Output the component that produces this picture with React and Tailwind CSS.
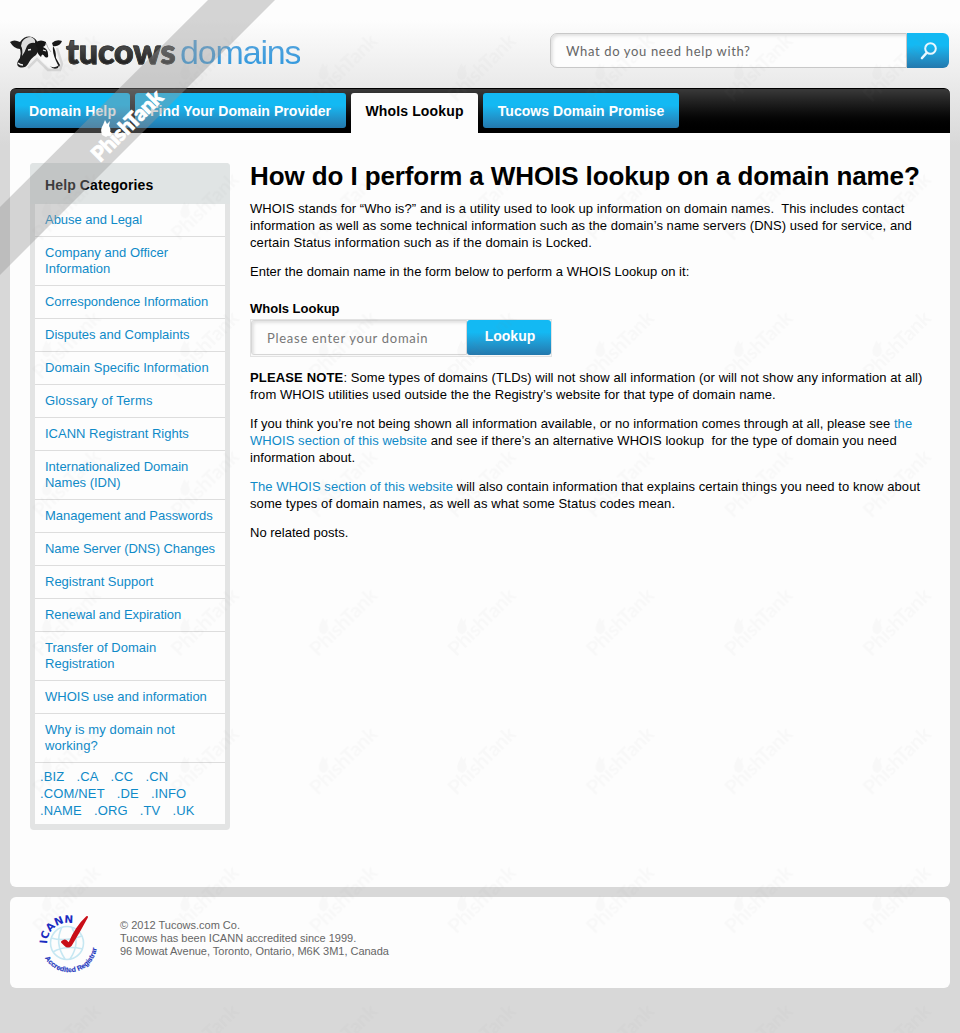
const categories = [
  { name: 'Abuse and Legal', track: 'tracking-[-0.03px]' },
  { name: 'Company and Officer\nInformation', track: 'tracking-[0.03px]' },
  { name: 'Correspondence Information', track: 'tracking-[-0.06px]' },
  { name: 'Disputes and Complaints', track: 'tracking-[0px]' },
  { name: 'Domain Specific Information', track: 'tracking-[0.04px]' },
  { name: 'Glossary of Terms', track: 'tracking-[0.18px]' },
  { name: 'ICANN Registrant Rights', track: 'tracking-[0px]' },
  { name: 'Internationalized Domain\nNames (IDN)', track: 'tracking-[-0.02px]' },
  { name: 'Management and Passwords', track: 'tracking-[-0.03px]' },
  { name: 'Name Server (DNS) Changes', track: 'tracking-[-0.08px]' },
  { name: 'Registrant Support', track: 'tracking-[0px]' },
  { name: 'Renewal and Expiration', track: 'tracking-[-0.05px]' },
  { name: 'Transfer of Domain\nRegistration', track: 'tracking-[0.02px]' },
  { name: 'WHOIS use and information', track: 'tracking-[0px]' },
  { name: 'Why is my domain not\nworking?', track: 'tracking-[0.1px]' },
];

const tlds = [
  ['.BIZ', '.CA', '.CC', '.CN'],
  ['.COM/NET', '.DE', '.INFO'],
  ['.NAME', '.ORG', '.TV', '.UK'],
];

const button = 'bg-gradient-to-b from-[#13b9f3] from-35% to-[#2378ad]';

function CowLogo() {
  return (
    <svg width="54" height="38" viewBox="0 0 54 38" className="shrink-0">
      <path d="M18 32 L27 23 L38 34 L50 34 L52 28 L47 12" fill="none" stroke="#888" strokeWidth="2.5" opacity=".25" />
      <path d="M32 6 Q36 0 42 4 L44 9 Q43 17 49 25 Q51 31 46 32 Q40 34 35 28 Q29 23 27 16 Q28 10 32 6Z" fill="#f8f8f8" />
      <path d="M0 6 Q4 3 10 6 Q15 -1 22 1 Q27 3 28 8 Q30 14 26 19 Q21 22 18 28 Q15 33 9 31 Q6 29 8 25 Q12 20 10 13 Q4 13 0 6Z" fill="#1d1d1d" />
      <path d="M12 6 Q15 1 21 1 Q26 3 25 7 Q20 6 17 10 Q15 16 12 20 Q13 13 11 10Z" fill="#dedede" />
      <path d="M18 14 L21 13.5 M8 27 Q10 29 13 29" stroke="#eee" strokeWidth="1.3" fill="none" />
      <path d="M26 6 Q31 3 36 6 Q36 10 33 11 Q38 13 38 18 Q39 23 35 21 Q32 16 31 21 Q26 17 28 12 Q25 10 26 6Z M42 7 Q46 3 52 5 Q50 11 43 10Z M43 10 Q46 14 46 22 L50 29 L49 31 L46 25 Q42 16 43 10Z" fill="#171717" />
      <path d="M33 14 L36 15" stroke="#eee" strokeWidth="1.2" />
      <path d="M40 30 Q44 33 49 29 L48 32 Q43 34 40 30Z" fill="#222" />
      <path d="M36 7 Q38 13 41 16" stroke="#aaa" strokeWidth=".8" fill="none" />
    </svg>
  );
}

function IcannSeal() {
  return (
    <svg width="60" height="62" viewBox="0 0 60 62" className="overflow-visible">
      <defs>
        <path id="sealTop" d="M12 33 A21 21 0 0 1 53.8 30" />
        <path id="sealBottom" d="M10 47 A27 27 0 0 0 58.5 20" />
      </defs>
      <g fill="none" stroke="#c6e7f2" strokeWidth="1.6">
        <circle cx="32" cy="32" r="16.5" />
        <path d="M16 27 Q30 31 47 25 M18 41 Q29 34 48 38 M27 16 Q19 32 30 48 M37 17 Q46 32 35 48" />
      </g>
      <text fontFamily="DejaVu Sans, sans-serif" fontSize="10.5" fontWeight="700" fill="#1a2bc0" letterSpacing=".2">
        <textPath href="#sealTop">ICANN</textPath>
      </text>
      <text fontFamily="Liberation Sans, sans-serif" fontSize="7" fontWeight="700" fill="#2336bd" stroke="#2336bd" strokeWidth=".15">
        <textPath href="#sealBottom">Accredited Registrar</textPath>
      </text>
      <path d="M27 31 Q30 28 32 31 L34 33 Q41 16 52 6 Q45 19 36 34 Q33 37 30 34Z" fill="#c90e18" stroke="#c90e18" strokeWidth="2" strokeLinejoin="round" />
    </svg>
  );
}

function Fish({ x, y }) {
  return <path transform={`translate(${x} ${y})`} d="M-1 -8 L1 -4 L4 -7 L3 -2 Q6 2 3 7 L0 9 L-4 7 Q-6 1 -3 -3Z" />;
}

function Watermark() {
  return (
    <svg width="960" height="1033" className="pointer-events-none absolute left-0 top-0">
      <defs>
        <pattern id="marks" width="138.4" height="138.6" patternUnits="userSpaceOnUse">
          <g fill="#777" opacity=".04">
            <text transform="translate(41 103) rotate(-45)" fontFamily="Lato, sans-serif" fontSize="20" fontWeight="700" textLength="86">PhishTank</text>
            <Fish x="47" y="71" />
          </g>
        </pattern>
      </defs>
      <rect width="960" height="1033" fill="url(#marks)" />
      <path d="M208 0 H275 L0 275 V207Z" fill="#969696" fillOpacity=".4" />
      <g fill="#fff">
        <text transform="translate(100 163) rotate(-45)" fontFamily="Lato, sans-serif" fontSize="21" fontWeight="900" textLength="91" stroke="#fff" strokeWidth=".8">PhishTank</text>
        <Fish x="106" y="128" />
      </g>
    </svg>
  );
}

function Tab({ children, active, className }) {
  return (
    <a className={`flex justify-center whitespace-nowrap text-sm leading-[36px] font-bold ${className} ${active ? 'h-10 rounded-t-[3px] bg-[#fdfdfd] text-black' : `h-[35px] rounded-[3px] text-white ${button}`}`}>
      {children}
    </a>
  );
}

function Line({ children, className = 'tracking-[0.06px]' }) {
  return <span className={`block ${className}`}>{children}</span>;
}

function Link({ children }) {
  return <a className="text-[#0f8ac8]">{children}</a>;
}

export default function App() {
  return (
    <div className="relative h-[1033px] w-[960px] overflow-hidden bg-[#d8d8d8] bg-[linear-gradient(#fdfdfd_20px,#d8d8d8_145px)] px-[10px] font-['Liberation_Sans',Arial,sans-serif] text-[13px] text-black">
      <header className="flex h-[88px] items-start justify-between">
        <div className="flex pt-[36px]">
          <CowLogo />
          <div className="flex leading-[34px] whitespace-nowrap">
            <span className="-mt-[2px] h-[38px] w-[116px] bg-gradient-to-b from-[#666] to-[#111] bg-clip-text pl-[2px] font-['Lato',sans-serif] text-[34px] font-black tracking-[-0.1px] text-transparent [-webkit-text-stroke:0.8px_#383838]">tucows</span>
            <span className="-mt-[1px] h-[38px] bg-gradient-to-b from-[#5aa6dc] to-[#2496de] bg-clip-text text-[34px] tracking-[-1.15px] text-transparent">domains</span>
          </div>
        </div>
        <div className="mt-[33px] mr-px flex h-[35px] w-[399px]">
          <div className="flex flex-1 items-center rounded-l-[7px] border border-[#c8c8c8] bg-[#fdfdfd] pt-[2px] pl-[15px] font-['Lato',sans-serif] text-[13px] tracking-[0.65px] text-[#666] shadow-[inset_2px_2px_3px_#e2e2e2]">What do you need help with?</div>
          <div className={`flex w-[42px] items-center justify-center rounded-r-[6px] ${button}`}>
            <svg width="18" height="20" viewBox="0 0 18 20" fill="none" stroke="#eaf8ff" strokeWidth="2" strokeLinecap="round">
              <circle cx="11.5" cy="7.5" r="5.3" />
              <path d="M7.5 12 L3 17" strokeWidth="2.6" />
            </svg>
          </div>
        </div>
      </header>

      <nav className="flex h-[45px] gap-[5px] rounded-t-[6px] border-t border-black bg-gradient-to-b from-[#3a3a3a] to-black pt-1 pl-[5px]">
        <Tab className="w-[115px] tracking-[0.15px]">Domain Help</Tab>
        <Tab className="w-[211px] tracking-[0.05px]">Find Your Domain Provider</Tab>
        <Tab active className="w-[127px] tracking-[0.15px]">WhoIs Lookup</Tab>
        <Tab className="w-[196px] tracking-[0.05px]">Tucows Domain Promise</Tab>
      </nav>

      <main className="flex h-[754px] items-start gap-5 rounded-b-[6px] bg-[#fdfdfd] pt-[30px] pl-5">
        <aside className="w-[200px] rounded-[4px] bg-[#e3e4e4] px-[5px] pb-[6px]">
          <h2 className="-mx-[5px] h-[41px] rounded-t-[4px] bg-[#e0e4e4] pl-[15px] text-sm leading-[45px] font-bold tracking-[0.12px]">Help Categories</h2>
          <div className="bg-[#fdfdfd] text-[#0f8ac8]">
            {categories.map(({ name, track }) => (
              <a key={name} className={`block border-b border-[#ddd] px-[10px] py-2 leading-4 whitespace-pre ${track}`}>{name}</a>
            ))}
            <div className="h-[61px] pt-[5px] pl-[5px] leading-[17px]">
              {tlds.map((row) => (
                <div key={row[0]} className="flex gap-3 tracking-[0.15px]">
                  {row.map((tld) => <a key={tld}>{tld}</a>)}
                </div>
              ))}
            </div>
          </div>
        </aside>

        <article className="flex flex-col gap-3 leading-[17px] whitespace-pre">
          <h1 className="-mb-[5px] h-[30px] text-[26px] leading-[27px] font-bold tracking-[-0.1px]">How do I perform a WHOIS lookup on a domain name?</h1>
          <p>
            <Line className="tracking-[0.085px]">{'WHOIS stands for “Who is?” and is a utility used to look up information on domain names.  This includes contact'}</Line>
            <Line>information as well as some technical information such as the domain’s name servers (DNS) used for service, and</Line>
            <Line className="tracking-[0.1px]">certain Status information such as if the domain is Locked.</Line>
          </p>
          <p><Line className="tracking-[0.03px]">Enter the domain name in the form below to perform a WHOIS Lookup on it:</Line></p>
          <div className="mt-2">
            <div className="font-bold">WhoIs Lookup</div>
            <div className="mt-[2px] flex h-[38px] w-[302px] border border-[#e2e2e2] bg-[#f8f8f8]">
              <div className="flex h-[35px] w-[216px] items-center rounded-l-[3px] border border-[#d6d6d6] bg-[#fdfdfd] pt-[2px] pl-[15px] font-['Lato',sans-serif] text-[13px] tracking-[0.72px] text-[#777] shadow-[inset_2px_2px_3px_#e2e2e2]">Please enter your domain</div>
              <div className={`h-[35px] w-[84px] rounded-[3px] pl-[2px] text-center text-sm leading-[33px] font-bold text-white ${button}`}>Lookup</div>
            </div>
          </div>
          <p>
            <Line className="tracking-[0.06px]"><b className="tracking-[0.15px]">PLEASE NOTE</b>: Some types of domains (TLDs) will not show all information (or will not show any information at all)</Line>
            <Line className="tracking-[0.08px]">from WHOIS utilities used outside the the Registry’s website for that type of domain name.</Line>
          </p>
          <p>
            <Line className="tracking-[0.045px]">If you think you’re not being shown all information available, or no information comes through at all, please see <Link>the</Link></Line>
            <Line className="tracking-[0.075px]"><Link>WHOIS section of this website</Link>{' and see if there’s an alternative WHOIS lookup  for the type of domain you need'}</Line>
            <Line>information about.</Line>
          </p>
          <p>
            <Line className="tracking-[0.065px]"><Link>The WHOIS section of this website</Link> will also contain information that explains certain things you need to know about</Line>
            <Line className="tracking-[0.09px]">some types of domain names, as well as what some Status codes mean.</Line>
          </p>
          <p>No related posts.</p>
        </article>
      </main>

      <footer className="mt-[10px] flex h-[91px] rounded-[6px] bg-[#fdfdfd] pt-[14px] pl-[25px]">
        <IcannSeal />
        <div className="ml-[25px] pt-[8px] text-[11px] leading-[13px] text-[#666]">
          <div>© 2012 Tucows.com Co.</div>
          <div>Tucows has been ICANN accredited since 1999.</div>
          <div className="tracking-[-0.02px]">96 Mowat Avenue, Toronto, Ontario, M6K 3M1, Canada</div>
        </div>
      </footer>
      <Watermark />
    </div>
  );
}
